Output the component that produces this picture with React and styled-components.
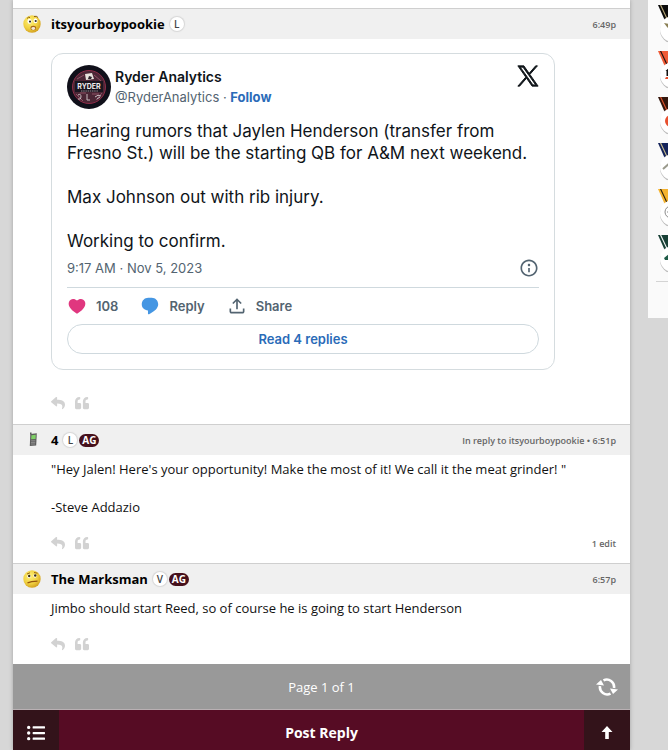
import React from 'react';
import styled, { createGlobalStyle } from 'styled-components';
import { FaReply, FaQuoteLeft, FaListUl } from 'react-icons/fa';

const medals = [
  { ribbon: '#0b0b0b', stripe: '#b8a878', mark: '#8b8055', logo: 'shield' },
  { ribbon: '#f05a35', stripe: '#1c1210', mark: '#111111', logo: 'number' },
  { ribbon: '#33160c', stripe: '#e0532c', mark: '#e8502f', logo: 'ball' },
  { ribbon: '#14235a', stripe: '#c9bd8a', mark: '#9a9a8c', logo: 'slash' },
  { ribbon: '#f5b32f', stripe: '#2b2110', mark: '#8c8c8c', logo: 'ring' },
  { ribbon: '#173f35', stripe: '#f4f6f5', mark: '#1f5c48', logo: 'wing' },
];

const Medal = ({ ribbon, stripe, mark, logo }) => (
  <MedalItem>
    <svg width='36' height='40' viewBox='0 0 36 40' aria-hidden='true'>
      <path d='M2 0H32L24 18H10Z' fill={ribbon} />
      <path d='M4 0H5.2L12.2 15H11Z' fill={stripe} />
      <circle cx='17' cy='25.3' r='13' fill='#bdbdbd' />
      <circle cx='17' cy='24' r='13' fill='#ffffff' />
      {logo === 'shield' && <path d='M8 18L20 20V28L14 25L11 22Z' fill={mark} />}
      {logo === 'number' && (
        <>
          <path d='M9.5 20L13 17V25H10.5V20Z' fill={mark} />
          <path d='M10 26H18V28H9Z' fill='#e8502f' />
        </>
      )}
      {logo === 'ball' && <circle cx='15' cy='24' r='6' fill={mark} />}
      {logo === 'slash' && <path d='M7 26L15 19' stroke={mark} strokeWidth='2' />}
      {logo === 'ring' && (
        <g fill='none' stroke={mark}>
          <circle cx='15' cy='23' r='6' />
          <path d='M11 23H20M13 19V27' />
        </g>
      )}
      {logo === 'wing' && <path d='M8 23L13 19L20 21V28H13L12 25H9Z' fill={mark} />}
    </svg>
  </MedalItem>
);

const Smiley = ({ worried }) => (
  <svg width='18' height='18' viewBox='0 0 18 18' aria-hidden='true'>
    <defs>
      <radialGradient id={worried ? 'worried' : 'confused'} cx='0.4' cy='0.35' r='0.7'>
        <stop offset='0' stopColor='#fff27a' />
        <stop offset='0.6' stopColor='#f0d040' />
        <stop offset='1' stopColor='#cf9a1c' />
      </radialGradient>
    </defs>
    <circle cx='9' cy='9' r='8.7' fill={worried ? 'url(#worried)' : 'url(#confused)'} />
    {worried ? (
      <>
        <path d='M4 3.5Q5.5 1.5 7 2.5M11 1.5Q13.5 0.5 15 2.5' fill='none' stroke='#8a5a10' />
        <ellipse cx='6.5' cy='6.3' rx='2' ry='2.5' fill='#fff' />
        <ellipse cx='12.5' cy='5.7' rx='2' ry='2.5' fill='#fff' />
        <circle cx='7' cy='6.6' r='1.1' fill='#33302a' />
        <circle cx='12.7' cy='6' r='1.1' fill='#33302a' />
        <ellipse cx='10.3' cy='13' rx='2.8' ry='2.2' fill='#a5661b' />
        <ellipse cx='10.3' cy='13.5' rx='1.9' ry='1.4' fill='#f5e9d4' />
      </>
    ) : (
      <>
        <path d='M4 4L7 2.8M11 2.5L14.5 3.2' stroke='#9a6812' />
        <ellipse cx='6' cy='6.3' rx='1.6' ry='1.9' fill='#fff' />
        <ellipse cx='12' cy='5.8' rx='1.6' ry='1.9' fill='#fff' />
        <circle cx='6.2' cy='6' r='1.2' fill='#3a2c14' />
        <circle cx='12.2' cy='5.5' r='1.2' fill='#3a2c14' />
        <path d='M4.5 12.8Q8 11.5 14.5 11.2' fill='none' stroke='#94520f' strokeWidth='1.3' />
      </>
    )}
  </svg>
);

const Phone = () => (
  <svg width='18' height='18' viewBox='0 0 18 18' aria-hidden='true'>
    <path d='M7.8 3.5V1.5' stroke='#4c4c4c' strokeWidth='1.4' />
    <path d='M7.3 3L13.8 2.2L13.2 14.6L6.8 15Z' fill='#5d5d5d' />
    <path d='M8.4 4.2L12.8 3.7L12.6 8L8.2 8.2Z' fill='#7fd067' />
    <path d='M8.2 9.8H12.3M8 11.4H12.2M8 13H12' stroke='#a4a4a4' strokeWidth='0.7' />
  </svg>
);

const RyderLogo = () => (
  <svg width='44' height='44' viewBox='0 0 44 44' role='img' aria-label='Ryder Analytics'>
    <circle cx='22' cy='22' r='22' fill='#10101a' />
    <circle cx='22' cy='22' r='16.5' fill='#4b2635' stroke='#8d2c48' />
    <path d='M10 14L17 10M27 10L34 16M9 29L16 36M29 35L35 28M12 17H18M28 17H33M13 28H19M25 29H32' stroke='#8f5266' />
    <path d='M18 9L25 8L27 14L19 15Z' fill='#e8e2dc' />
    <path d='M22 11L25 12L24 14L21 14Z' fill='#2a2129' />
    <path d='M11 30Q14 28 14 32Q14 35 11 34M20 29V35H23M28 32Q31 29 34 31M30 34L33 32' fill='none' stroke='#c9bcc0' />
    <rect x='8' y='16' width='28' height='11' fill='#1b1620' />
    <text x='22' y='24' textAnchor='middle' fontFamily='Inter, sans-serif' fontWeight='700' fontSize='7' fill='#f1eeee'>
      RYDER
    </text>
    <path d='M14 26H31' stroke='#9d8e95' strokeDasharray='1.5 0.7' />
  </svg>
);

const PostActions = ({ note }) => (
  <ActionRow>
    <IconButton type='button' aria-label='Reply'>
      <FaReply size={14} />
    </IconButton>
    <IconButton type='button' aria-label='Quote'>
      <FaQuoteLeft size={14} />
    </IconButton>
    {note && <Note>{note}</Note>}
  </ActionRow>
);

const PostHeader = ({ icon, name, level, club, info }) => (
  <HeaderBar>
    <Emblem>{icon}</Emblem>
    <UserName href='#user'>{name}</UserName>
    <Level>{level}</Level>
    {club && <Club>AG</Club>}
    <Note>{info}</Note>
  </HeaderBar>
);

const Tweet = () => (
  <Card>
    <CardTop>
      <RyderLogo />
      <Author>
        <strong>Ryder Analytics</strong>
        <span>
          @RyderAnalytics · <a href='#follow'>Follow</a>
        </span>
      </Author>
      <XLink href='#x' aria-label='View on X'>
        <svg width='22' height='22' viewBox='-1 -1 26 26' aria-hidden='true'>
          <path
            fill='currentColor'
            stroke='currentColor'
            strokeWidth='1.1'
            d='M14.258 10.152L23.176 0h-2.113l-7.747 8.813L7.133 0H0l9.352 13.328L0 23.973h2.113l8.176-9.309 6.531 9.309h7.133zm-2.895 3.293l-.949-1.328L2.875 1.56h3.246l6.086 8.523.945 1.328 7.91 11.078h-3.246z'
          />
        </svg>
      </XLink>
    </CardTop>
    <TweetText>
      Hearing rumors that Jaylen Henderson (transfer from Fresno St.) will be the starting QB for A&amp;M next weekend.
      {'\n\n'}Max Johnson out with rib injury.{'\n\n'}Working to confirm.
    </TweetText>
    <DateRow>
      <a href='#status'>9:17 AM · Nov 5, 2023</a>
      <button type='button' aria-label='About this post'>
        <svg width='20' height='20' viewBox='0 0 24 24' aria-hidden='true'>
          <path
            fill='currentColor'
            d='M13.5 8.5c0 .83-.67 1.5-1.5 1.5s-1.5-.67-1.5-1.5S11.17 7 12 7s1.5.67 1.5 1.5zM13 17v-5h-2v5h2zm-1 5.25c5.66 0 10.25-4.59 10.25-10.25S17.66 1.75 12 1.75 1.75 6.34 1.75 12 6.34 22.25 12 22.25zM20.25 12c0 4.56-3.69 8.25-8.25 8.25S3.75 16.56 3.75 12 7.44 3.75 12 3.75s8.25 3.69 8.25 8.25z'
          />
        </svg>
      </button>
    </DateRow>
    <TweetActions>
      <TweetAction type='button'>
        <svg width='20' height='20' viewBox='0 0 24 24' aria-hidden='true'>
          <path
            fill='#e0377f'
            d='M20.884 13.19c-1.351 2.48-4.001 5.12-8.379 7.67l-.503.3-.504-.3c-4.379-2.55-7.029-5.19-8.382-7.67-1.36-2.5-1.41-4.86-.514-6.67.887-1.79 2.647-2.91 4.601-3.01 1.651-.09 3.368.56 4.798 2.01 1.429-1.45 3.146-2.1 4.796-2.01 1.954.1 3.714 1.22 4.601 3.01.896 1.81.846 4.17-.514 6.67z'
          />
        </svg>
        108
      </TweetAction>
      <TweetAction type='button'>
        <svg width='20' height='20' viewBox='0 0 24 24' aria-hidden='true'>
          <path
            fill='#4596e3'
            d='M14.046 2.242l-4.148-.01h-.002c-4.374 0-7.8 3.427-7.8 7.802 0 4.098 3.186 7.206 7.465 7.37v3.828c0 .108.044.286.12.403.142.225.384.347.632.347.138 0 .277-.038.402-.118.264-.168 6.473-4.14 8.088-5.506 1.902-1.61 3.04-3.97 3.043-6.312v-.017c-.006-4.367-3.43-7.787-7.8-7.788z'
          />
        </svg>
        Reply
      </TweetAction>
      <TweetAction type='button'>
        <svg width='20' height='20' viewBox='0 0 24 24' aria-hidden='true'>
          <path
            fill='currentColor'
            d='M12 2.59l5.7 5.7-1.41 1.42L13 6.41V16h-2V6.41l-3.3 3.3-1.41-1.42L12 2.59zM21 15l-.02 3.51c0 1.38-1.12 2.49-2.5 2.49H5.5C4.11 21 3 19.88 3 18.5V15h2v3.5c0 .28.22.5.5.5h12.98c.28 0 .5-.22.5-.5L19 15h2z'
          />
        </svg>
        Share
      </TweetAction>
    </TweetActions>
    <RepliesLink href='#replies'>Read 4 replies</RepliesLink>
  </Card>
);

const App = () => {
  return (
    <Page>
      <GlobalStyle />
      <Thread>
        <Post>
          <PostHeader icon={<Smiley worried />} name='itsyourboypookie' level='L' info='6:49p' />
          <PostBody $embed>
            <Tweet />
            <PostActions />
          </PostBody>
        </Post>

        <Post>
          <PostHeader icon={<Phone />} name='4' level='L' club info='In reply to itsyourboypookie • 6:51p' />
          <PostBody>
            <p>"Hey Jalen! Here's your opportunity! Make the most of it! We call it the meat grinder! "</p>
            <p>-Steve Addazio</p>
            <PostActions note='1 edit' />
          </PostBody>
        </Post>

        <Post>
          <PostHeader icon={<Smiley />} name='The Marksman' level='V' club info='6:57p' />
          <PostBody>
            <p>Jimbo should start Reed, so of course he is going to start Henderson</p>
            <PostActions />
          </PostBody>
        </Post>

        <Pager>
          <span>Page 1 of 1</span>
          <button type='button' aria-label='Refresh'>
            <svg width='22' height='18' viewBox='0 0 22 18' aria-hidden='true'>
              <path d='M7.5 2.4A7.3 7.3 0 0 1 18 10M14.5 15.6A7.3 7.3 0 0 1 4 8' fill='none' stroke='#fff' strokeWidth='2.6' />
              <path d='M14 10.5L22 11.5L17 16ZM8 7.5L0 6.5L5 2Z' fill='#fff' />
            </svg>
          </button>
        </Pager>

        <ReplyBar>
          <BarButton type='button' aria-label='Topics'>
            <FaListUl size={18} />
          </BarButton>
          <BarButton type='button' $main>
            Post Reply
          </BarButton>
          <BarButton type='button' aria-label='Back to top'>
            <svg width='12' height='14' viewBox='0 0 12 14' aria-hidden='true'>
              <path d='M6 0L11.5 6H7.8V13H4.2V6H0.5Z' fill='#fff' />
            </svg>
          </BarButton>
        </ReplyBar>
      </Thread>

      <Sidebar>
        <MedalList>
          {medals.map((medal) => (
            <Medal key={medal.logo} {...medal} />
          ))}
        </MedalList>
      </Sidebar>
    </Page>
  );
};

export default App;

const GlobalStyle = createGlobalStyle`
  * {
    box-sizing: border-box;
  }
  body {
    margin: 0;
    background-color: #d7d7d7;
    color: #111111;
    font-family: 'Open Sans', 'Noto Sans', sans-serif;
    font-size: 13px;
  }
  button {
    border: 0;
    padding: 0;
    background: none;
    color: inherit;
    font: inherit;
    cursor: pointer;
  }
  a {
    color: inherit;
    text-decoration: none;
  }
  svg {
    display: block;
    flex-shrink: 0;
  }
`;

const Page = styled.div`
  display: flex;
  align-items: flex-start;
  gap: 18px;
  min-height: 100vh;
  padding-left: 13px;
  overflow: hidden;
`;

const Thread = styled.main`
  display: flex;
  flex: 1;
  flex-direction: column;
  min-width: 0;
  min-height: 100vh;
  padding-top: 8px;
  background-color: #ffffff;
  box-shadow: 0 0 4px rgba(0, 0, 0, 0.25);
`;

const Post = styled.article`
  border-top: 1px solid #cfcfcf;
`;

const HeaderBar = styled.header`
  display: flex;
  align-items: center;
  height: 30px;
  padding: 0 14px 0 10px;
  background-color: #f0f0f0;
`;

const Emblem = styled.span`
  width: 28px;
`;

const UserName = styled.a`
  margin-right: 5px;
  color: #000000;
  font-weight: 700;
`;

const Level = styled.span`
  width: 14px;
  height: 14px;
  border-radius: 50%;
  background-color: #ffffff;
  box-shadow: 0 0 1px 1px #d6d6d6;
  color: #444444;
  font-size: 10px;
  font-weight: 600;
  line-height: 14px;
  text-align: center;
`;

const Club = styled.span`
  margin-left: 2px;
  width: 20px;
  height: 13px;
  border-radius: 7px;
  background-color: #46101b;
  color: #ffffff;
  font-size: 10px;
  font-weight: 700;
  line-height: 13px;
  text-align: center;
`;

const Note = styled.span`
  margin-left: auto;
  color: #666666;
  font-size: 9px;
  font-weight: 600;
`;

const PostBody = styled.div`
  padding: ${({ $embed }) => ($embed ? '14px 14px 14px 38px' : '5px 14px 13px 38px')};

  p {
    margin: 0 0 20px;
    line-height: 18px;
  }
`;

const ActionRow = styled.div`
  display: flex;
  align-items: center;
  gap: 10px;
  height: 14px;
`;

const IconButton = styled.button`
  && {
    color: #d2d2d2;
  }
`;

const Card = styled.section`
  max-width: 504px;
  margin-bottom: 26px;
  padding: 11px 15px 15px;
  border: 1px solid #d5dcdf;
  border-radius: 12px;
  color: #0f1419;
  font-family: Inter, sans-serif;
  font-size: 13px;
`;

const CardTop = styled.div`
  display: flex;
  gap: 4px;
`;

const Author = styled.div`
  display: flex;
  flex-direction: column;
  padding-top: 2px;
  color: #536471;
  line-height: 20px;

  strong {
    color: #0f1419;
    font-size: 14px;
    font-weight: 600;
  }
  a {
    color: #2a6bb8;
    font-weight: 700;
  }
`;

const XLink = styled.a`
  margin-left: auto;
`;

const TweetText = styled.p`
  && {
    margin: 11px 0 5px;
    font-size: 17px;
    line-height: 22px;
    white-space: pre-line;
  }
`;

const DateRow = styled.div`
  display: flex;
  align-items: center;
  justify-content: space-between;
  height: 31px;
  padding-bottom: 8px;
  border-bottom: 1px solid #cfd9de;
  color: #536471;
`;

const TweetActions = styled.div`
  display: flex;
  align-items: center;
  gap: 22px;
  height: 36px;
  color: #536471;
`;

const TweetAction = styled.button`
  && {
    display: flex;
    align-items: center;
    gap: 9px;
    font-weight: 600;
  }
`;

const RepliesLink = styled.a`
  display: block;
  border: 1px solid #cfd9de;
  border-radius: 15px;
  color: #2a6bb8;
  font-weight: 600;
  line-height: 28px;
  text-align: center;
`;

const Pager = styled.nav`
  display: grid;
  grid-template-columns: 46px 1fr 46px;
  align-items: center;
  height: 46px;
  border-bottom: 1px solid #b9b0b3;
  background-color: #999999;
  color: #ffffff;
  text-align: center;

  span {
    grid-column: 2;
  }
  button {
    display: flex;
    justify-content: center;
  }
`;

const ReplyBar = styled.div`
  display: flex;
  flex: 1;
  min-height: 40px;
`;

const BarButton = styled.button`
  && {
    display: flex;
    flex: ${({ $main }) => ($main ? '1' : '0 0 46px')};
    align-items: center;
    justify-content: center;
    padding-top: 5px;
    background-color: ${({ $main }) => ($main ? '#560c24' : '#33131a')};
    color: #ffffff;
    font-size: 14px;
    font-weight: 700;
  }
`;

const Sidebar = styled.aside`
  flex: 0 0 20px;
  height: 318px;
  padding: 5px 0 0 8px;
  overflow: hidden;
  background-color: #fafafa;
`;

const MedalList = styled.ul`
  margin: 0;
  padding: 0;
  border-bottom: 1px solid #d4d4d4;
  list-style: none;
`;

const MedalItem = styled.li`
  height: 46px;
`;
